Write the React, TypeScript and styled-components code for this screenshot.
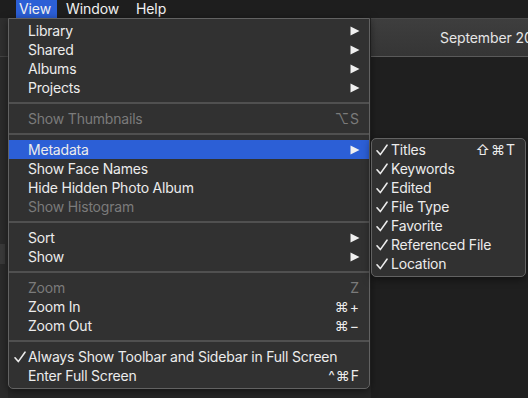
import React from "react";
import styled, { createGlobalStyle } from "styled-components";

const Global = createGlobalStyle`
  html, body { margin: 0; padding: 0; background: #1f1f1f; }
  body { font-family: Inter, "Noto Sans", "DejaVu Sans", sans-serif; }
`;

const Page = styled.div`
  position: relative;
  width: 528px;
  height: 398px;
  overflow: hidden;
  background: #1f1f1f;
  display: flex;
  flex-direction: column;
`;

const MenuBar = styled.div`
  height: 18px;
  flex: none;
  background: #1e1e1e;
  display: flex;
  align-items: stretch;
  padding-left: 16px;
`;

const MenuTitle = styled.div<{ $active?: boolean; $w: number; $pl: number }>`
  width: ${(p) => p.$w}px;
  flex: none;
  padding-left: ${(p) => p.$pl}px;
  box-sizing: border-box;
  font-size: 14px;
  letter-spacing: -0.1px;
  line-height: 18px;
  color: #f2f2f2;
  background: ${(p) => (p.$active ? "#2c5fd6" : "transparent")};
`;

const Workspace = styled.div`
  flex: 1;
  display: flex;
`;

const LeftStrip = styled.div`
  width: 8px;
  flex: none;
  background: #2b2b2b;
  display: flex;
  flex-direction: column;
`;

const LeftTop = styled.div`
  height: 38px;
  background: #2f2f2f;
  border-bottom: 1px solid #444;
`;

const LeftChip = styled.div`
  margin-top: 187px;
  height: 20px;
  width: 5px;
  background: #3a3a3a;
`;

const Spacer = styled.div`
  width: 363px;
  flex: none;
  background: #262626;
`;

const RightArea = styled.div`
  flex: 1;
  min-width: 0;
  display: flex;
  flex-direction: column;
  background: #1f1f1f;
`;

const Toolbar = styled.div`
  height: 37px;
  border-top: 1px solid #4a4a4a;
  border-bottom: 1px solid #5a5a5a;
  background: linear-gradient(#3e3e3e, #353535);
  display: flex;
  align-items: center;
  padding-left: 69px;
  white-space: nowrap;
  overflow: hidden;
  font-size: 14px;
  letter-spacing: -0.1px;
  color: #e6e6e6;
`;

const Menu = styled.div<{ $left: number; $top: number; $width: number; $pt: number; $round: string }>`
  position: absolute;
  left: ${(p) => p.$left}px;
  top: ${(p) => p.$top}px;
  width: ${(p) => p.$width}px;
  box-sizing: border-box;
  padding: ${(p) => p.$pt}px 0 3px;
  background: #313131;
  border: 1px solid #626262;
  border-radius: ${(p) => p.$round};
  box-shadow: 0 2px 8px rgba(0, 0, 0, 0.5);
`;

const Row = styled.div<{ $hl?: boolean; $dim?: boolean; $indent: number; $right: number }>`
  height: 19px;
  display: flex;
  align-items: center;
  padding-left: ${(p) => p.$indent}px;
  padding-right: ${(p) => p.$right}px;
  font-size: 14px;
  letter-spacing: -0.2px;
  color: ${(p) => (p.$dim ? "#7b7b7b" : "#ececec")};
  background: ${(p) => (p.$hl ? "#2c5fd6" : "transparent")};
  white-space: nowrap;
`;

const Check = styled.span<{ $w: number }>`
  width: ${(p) => p.$w}px;
  flex: none;
  display: flex;
  align-items: center;
`;

const Label = styled.span`
  flex: 1;
`;

const Shortcut = styled.span`
  font-family: Inter, "DejaVu Sans", sans-serif;
  letter-spacing: 1px;
`;

const Separator = styled.div`
  height: 2px;
  margin: 5px 0;
  background: #505050;
`;

const Arrow = () => (
  <svg width="10" height="10" viewBox="0 0 10 10">
    <polygon points="0.5,0.5 9.5,5 0.5,9.5" fill="#f0f0f0" />
  </svg>
);

const CheckMark = () => (
  <svg width="12" height="12" viewBox="0 0 12 12">
    <path d="M1 6.8 L4.3 10.6 L11 1.2" fill="none" stroke="#ececec" strokeWidth="1.6" strokeLinecap="round" strokeLinejoin="round" />
  </svg>
);

type Item =
  | { sep: true }
  | { sep?: false; label: string; sub?: boolean; key?: string; dim?: boolean; hl?: boolean; check?: boolean };

const mainItems: Item[] = [
  { label: "Library", sub: true },
  { label: "Shared", sub: true },
  { label: "Albums", sub: true },
  { label: "Projects", sub: true },
  { sep: true },
  { label: "Show Thumbnails", key: "⌥S", dim: true },
  { sep: true },
  { label: "Metadata", sub: true, hl: true },
  { label: "Show Face Names" },
  { label: "Hide Hidden Photo Album" },
  { label: "Show Histogram", dim: true },
  { sep: true },
  { label: "Sort", sub: true },
  { label: "Show", sub: true },
  { sep: true },
  { label: "Zoom", key: "Z", dim: true },
  { label: "Zoom In", key: "⌘+" },
  { label: "Zoom Out", key: "⌘−" },
  { sep: true },
  { label: "Always Show Toolbar and Sidebar in Full Screen", check: true },
  { label: "Enter Full Screen", key: "^⌘F" },
];

const subItems: Item[] = [
  { label: "Titles", check: true, key: "⇧⌘T" },
  { label: "Keywords", check: true },
  { label: "Edited", check: true },
  { label: "File Type", check: true },
  { label: "Favorite", check: true },
  { label: "Referenced File", check: true },
  { label: "Location", check: true },
];

const renderItems = (items: Item[], checkW: number, indent: number, right: number) =>
  items.map((it, i) =>
    it.sep ? (
      <Separator key={i} />
    ) : (
      <Row key={i} $hl={it.hl} $dim={it.dim} $indent={indent} $right={right}>
        <Check $w={checkW}>{it.check ? <CheckMark /> : null}</Check>
        <Label>{it.label}</Label>
        {it.sub && <Arrow />}
        {it.key && <Shortcut>{it.key}</Shortcut>}
      </Row>
    )
  );

export default function App() {
  return (
    <Page>
      <Global />
      <MenuBar>
        <MenuTitle $active $w={41} $pl={3}>View</MenuTitle>
        <MenuTitle $w={70} $pl={9}>Window</MenuTitle>
        <MenuTitle $w={60} $pl={9}>Help</MenuTitle>
      </MenuBar>
      <Workspace>
        <LeftStrip>
          <LeftTop />
          <LeftChip />
        </LeftStrip>
        <Spacer />
        <RightArea>
          <Toolbar>September 2017</Toolbar>
        </RightArea>
      </Workspace>
      <Menu $left={8} $top={18} $width={362} $pt={2} $round="0 0 5px 5px">
        {renderItems(mainItems, 14, 5, 9)}
      </Menu>
      <Menu $left={371} $top={138} $width={155} $pt={1} $round="5px">
        {renderItems(subItems, 15, 4, 9)}
      </Menu>
    </Page>
  );
}
